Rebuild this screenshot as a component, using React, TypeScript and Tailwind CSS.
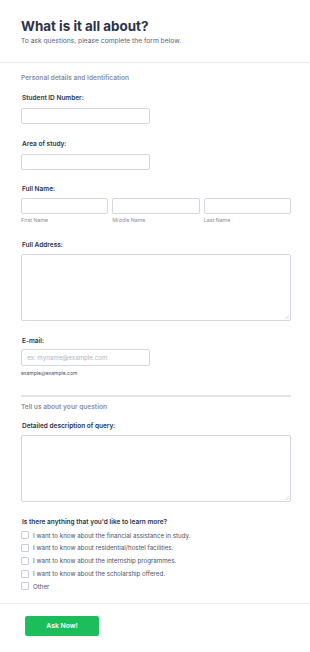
const font = { fontFamily: 'Inter, "Noto Sans", sans-serif' }

function Label({ children }: { children: React.ReactNode }) {
  return <div className="text-[6.5px] font-semibold leading-[8px] text-[#2c3345]">{children}</div>
}

function Input({ className = '', placeholder }: { className?: string; placeholder?: string }) {
  return (
    <div className={`h-[16px] rounded-[2px] border border-[#d3d7e0] bg-white px-[5px] text-[6.2px] leading-[14px] text-[#b0b5c3] ${className}`}>
      {placeholder}
    </div>
  )
}

function TextArea() {
  return (
    <div className="relative h-[67px] w-[270px] rounded-[2px] border border-[#d3d7e0] bg-white">
      <svg className="absolute bottom-[1px] right-[1px]" width="4" height="4" viewBox="0 0 4 4">
        <path d="M4 0L0 4M4 2L2 4" stroke="#c4c7d0" strokeWidth="0.6" />
      </svg>
    </div>
  )
}

function Checkbox({ label }: { label: string }) {
  return (
    <div className="flex h-[12.75px] items-center gap-[4px]">
      <div className="h-[8px] w-[8px] rounded-[1px] border border-[#c9cdd8] bg-white" />
      <span className="text-[6.2px] text-[#4a5163]">{label}</span>
    </div>
  )
}

function SubLabel({ children }: { children: React.ReactNode }) {
  return <div className="mt-[3px] text-[5.3px] leading-[6px] text-[#8a8ea0]">{children}</div>
}

export default function App() {
  return (
    <div className="min-h-[652px] w-[310px] bg-white" style={font}>
      <div className="px-[21px] pt-[17px]">
        <h1 className="text-[13.4px] font-bold leading-[18px] text-[#2c3345]">What is it all about?</h1>
        <p className="mt-[2px] text-[6.7px] leading-[8px] text-[#57647e]">
          To ask questions, please complete the form below.
        </p>
      </div>
      <div className="mt-[17px] h-px w-full bg-[#e9eaee]" />

      <div className="px-[21px]">
        <div className="mt-[11px] text-[6.6px] font-semibold leading-[8px] text-[#8e8e9c]">
          Personal details and Identification
        </div>

        <div className="mt-[12px] pl-[1px]">
          <Label>Student ID Number:</Label>
        </div>
        <Input className="mt-[6px] w-[129px]" />

        <div className="mt-[16px] pl-[1px]">
          <Label>Area of study:</Label>
        </div>
        <Input className="mt-[6px] w-[129px]" />

        <div className="mt-[15px] pl-[1px]">
          <Label>Full Name:</Label>
        </div>
        <div className="mt-[5px] flex w-[270px] gap-[4px]">
          <div className="flex-1">
            <Input />
            <SubLabel>First Name</SubLabel>
          </div>
          <div className="flex-1">
            <Input />
            <SubLabel>Middle Name</SubLabel>
          </div>
          <div className="flex-1">
            <Input />
            <SubLabel>Last Name</SubLabel>
          </div>
        </div>

        <div className="mt-[18px] pl-[1px]">
          <Label>Full Address:</Label>
        </div>
        <div className="mt-[5px]">
          <TextArea />
        </div>

        <div className="mt-[16px] pl-[1px]">
          <Label>E-mail:</Label>
        </div>
        <Input className="mt-[4px] h-[17px] w-[129px] leading-[15px]" placeholder="ex: myname@example.com" />
        <div className="mt-[4px] text-[5px] leading-[6px] text-[#4a5163]">example@example.com</div>

        <div className="mt-[19px] h-[2px] w-[270px] bg-[#e3e4e9]" />
        <div className="mt-[6px] text-[6.6px] font-semibold leading-[8px] text-[#8e8e9c]">
          Tell us about your question
        </div>

        <div className="mt-[11px] pl-[1px]">
          <Label>Detailed description of query:</Label>
        </div>
        <div className="mt-[5px]">
          <TextArea />
        </div>

        <div className="mt-[16px] pl-[1px]">
          <Label>Is there anything that you'd like to learn more?</Label>
        </div>
        <div className="mt-[3px] flex flex-col">
          <Checkbox label="I want to know about the financial assistance in study." />
          <Checkbox label="I want to know about residential/hostel facilities." />
          <Checkbox label="I want to know about the internship programmes." />
          <Checkbox label="I want to know about the scholarship offered." />
          <Checkbox label="Other" />
        </div>
      </div>

      <div className="mt-[10px] h-px w-full bg-[#eceef2]" />
      <div className="px-[25px] pt-[12px]">
        <button className="flex h-[20px] w-[74px] items-center justify-center rounded-[2px] bg-[#1cbd5b] text-[6.8px] font-semibold text-white">
          Ask Now!
        </button>
      </div>
    </div>
  )
}
